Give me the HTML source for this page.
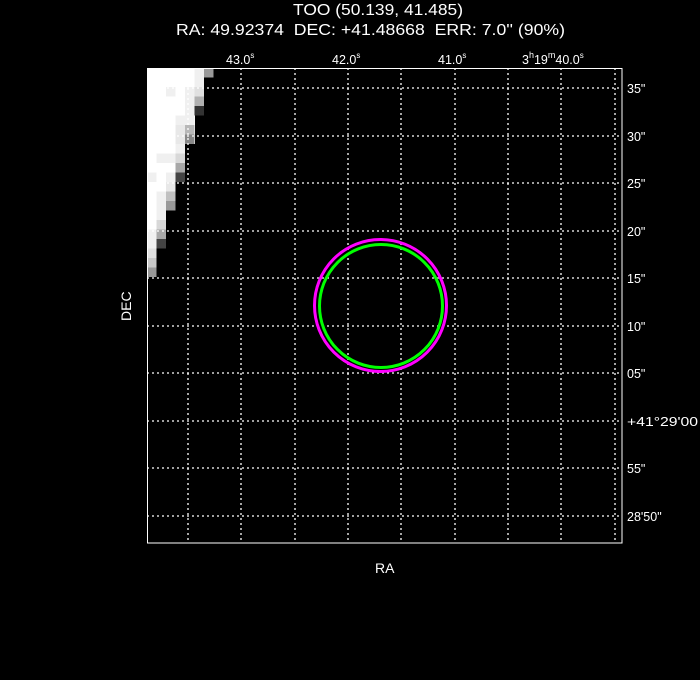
<!DOCTYPE html>
<html><head><style>
html,body{margin:0;padding:0;background:#000;}
svg{display:block;}
text{font-family:"Liberation Sans",sans-serif;fill:#fff;}
</style></head><body>
<svg width="700" height="680" viewBox="0 0 700 680" xmlns="http://www.w3.org/2000/svg">
<rect width="700" height="680" fill="#000"/>
<text x="293" y="15" font-size="16" textLength="170" lengthAdjust="spacingAndGlyphs">TOO (50.139, 41.485)</text>
<text x="176" y="35" font-size="16" textLength="389" lengthAdjust="spacingAndGlyphs" xml:space="preserve">RA: 49.92374  DEC: +41.48668  ERR: 7.0'' (90%)</text>
<g font-size="12.5">
<text x="226" y="64">43.0<tspan dy="-6" font-size="8">s</tspan></text>
<text x="332" y="64">42.0<tspan dy="-6" font-size="8">s</tspan></text>
<text x="438" y="64">41.0<tspan dy="-6" font-size="8">s</tspan></text>
<text x="522" y="64">3<tspan dy="-6" font-size="9">h</tspan><tspan dy="6">19</tspan><tspan dy="-6" font-size="9">m</tspan><tspan dy="6">40.0</tspan><tspan dy="-6" font-size="8">s</tspan></text>
<text x="627" y="93">35"</text>
<text x="627" y="141">30"</text>
<text x="627" y="188">25"</text>
<text x="627" y="236">20"</text>
<text x="627" y="283">15"</text>
<text x="627" y="331">10"</text>
<text x="627" y="378">05"</text>
<text x="627" y="426" textLength="71" lengthAdjust="spacingAndGlyphs">+41°29'00</text>
<text x="627" y="473">55"</text>
<text x="627" y="521">28'50"</text>
</g>
<g fill="#fff">
<rect x="147" y="68" width="48" height="209"/>
</g>
<g>
<rect x="194.5" y="68" width="9.5" height="9.5" fill="#f0f0f0"/>
<rect x="204" y="68" width="9.5" height="9.5" fill="#999"/>
<rect x="194.5" y="77.5" width="9.5" height="9.5" fill="#f0f0f0"/>
<rect x="166" y="87" width="9.5" height="9.5" fill="#f0f0f0"/>
<rect x="185" y="87" width="9.5" height="9.5" fill="#f0f0f0"/>
<rect x="194.5" y="87" width="9.5" height="9.5" fill="#e0e0e0"/>
<rect x="185" y="96.5" width="9.5" height="9.5" fill="#f0f0f0"/>
<rect x="194.5" y="96.5" width="9.5" height="9.5" fill="#b0b0b0"/>
<rect x="185" y="106" width="9.5" height="9.5" fill="#f0f0f0"/>
<rect x="194.5" y="106" width="9.5" height="9.5" fill="#333"/>
<rect x="175.5" y="115.5" width="19" height="9.5" fill="#f0f0f0"/>
<rect x="175.5" y="125" width="9.5" height="9.5" fill="#e8e8e8"/>
<rect x="185" y="125" width="9.5" height="9.5" fill="#b8b8b8"/>
<rect x="175.5" y="134.5" width="9.5" height="9.5" fill="#e8e8e8"/>
<rect x="185" y="134.5" width="9.5" height="9.5" fill="#888"/>
<rect x="185" y="144" width="10" height="133" fill="#000"/>
<rect x="175.5" y="144" width="9.5" height="9.5" fill="#f0f0f0"/>
<rect x="156.5" y="153.5" width="19" height="9.5" fill="#f0f0f0"/>
<rect x="175.5" y="153.5" width="9.5" height="9.5" fill="#d8d8d8"/>
<rect x="175.5" y="163" width="9.5" height="9.5" fill="#a8a8a8"/>
<rect x="147" y="172.5" width="9.5" height="9.5" fill="#f0f0f0"/>
<rect x="166" y="172.5" width="9.5" height="9.5" fill="#f0f0f0"/>
<rect x="175.5" y="172.5" width="9.5" height="9.5" fill="#444"/>
<rect x="175.5" y="182" width="10" height="95" fill="#000"/>
<rect x="166" y="182" width="9.5" height="9.5" fill="#e8e8e8"/>
<rect x="156.5" y="191.5" width="9.5" height="9.5" fill="#f0f0f0"/>
<rect x="166" y="191.5" width="9.5" height="9.5" fill="#c0c0c0"/>
<rect x="156.5" y="201" width="9.5" height="9.5" fill="#f0f0f0"/>
<rect x="166" y="201" width="9.5" height="9.5" fill="#999"/>
<rect x="166" y="210.5" width="10" height="67" fill="#000"/>
<rect x="156.5" y="210.5" width="9.5" height="9.5" fill="#f0f0f0"/>
<rect x="156.5" y="220" width="9.5" height="9.5" fill="#d8d8d8"/>
<rect x="147" y="229.5" width="9.5" height="9.5" fill="#f0f0f0"/>
<rect x="156.5" y="229.5" width="9.5" height="9.5" fill="#a8a8a8"/>
<rect x="147" y="239" width="9.5" height="9.5" fill="#f0f0f0"/>
<rect x="156.5" y="239" width="9.5" height="9.5" fill="#444"/>
<rect x="156.5" y="248.5" width="10" height="29" fill="#000"/>
<rect x="147" y="248.5" width="9.5" height="9.5" fill="#e0e0e0"/>
<rect x="147" y="258" width="9.5" height="9.5" fill="#c8c8c8"/>
<rect x="147" y="267.5" width="9.5" height="9.5" fill="#999"/>
</g>
<g stroke="#fff" stroke-width="1.3" stroke-dasharray="2,3" fill="none">
<path d="M188 68V543M241 68V543M295 68V543M348 68V543M401 68V543M455 68V543M508 68V543M561 68V543M615 68V543"/>
<path d="M147 88H622M147 136H622M147 183H622M147 231H622M147 278H622M147 326H622M147 373H622M147 421H622M147 468H622M147 516H622"/>
</g>
<rect x="147.5" y="68.5" width="474.5" height="474.5" fill="none" stroke="#fff" stroke-width="1"/>
<circle cx="380.5" cy="305.5" r="66" fill="none" stroke="#ff00ff" stroke-width="3"/>
<circle cx="381" cy="306" r="61.5" fill="none" stroke="#00ff00" stroke-width="3"/>
<text x="375" y="573" font-size="14">RA</text>
<text transform="translate(131,321) rotate(-90)" font-size="14">DEC</text>
</svg>
</body></html>
